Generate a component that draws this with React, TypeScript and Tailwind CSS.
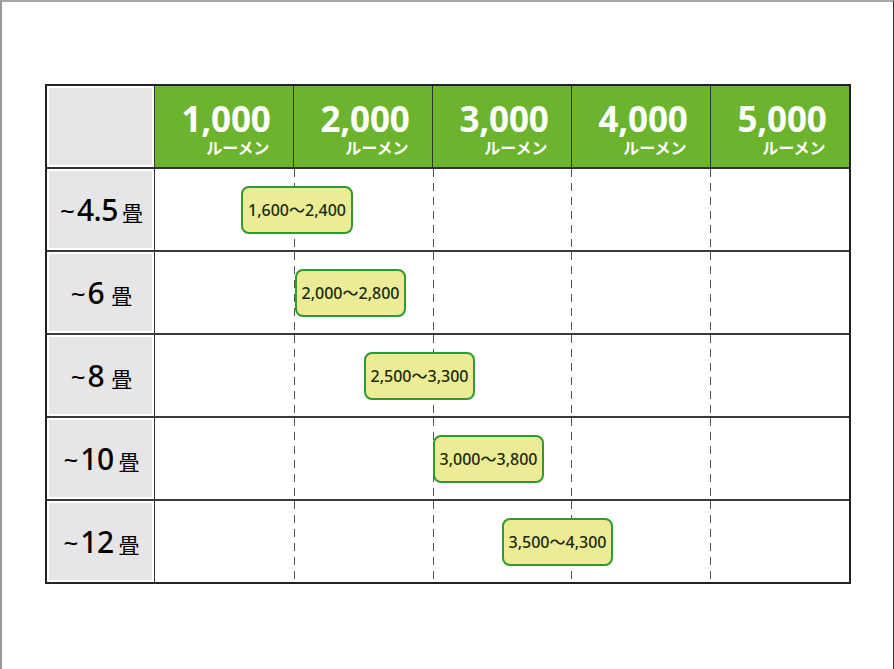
import React from "react";

const lumens = ["1,000", "2,000", "3,000", "4,000", "5,000"];

const rows = [
  { size: "4.5", range: "1,600～2,400", left: 86, width: 112, gap: 4 },
  { size: "6", range: "2,000～2,800", left: 140, width: 111, gap: 7 },
  { size: "8", range: "2,500～3,300", left: 209, width: 111, gap: 7 },
  { size: "10", range: "3,000～3,800", left: 278, width: 111, gap: 5 },
  { size: "12", range: "3,500～4,300", left: 347, width: 111, gap: 5 },
];

function Dashed() {
  return (
    <div className="w-px h-full shrink-0 bg-[repeating-linear-gradient(to_bottom,#555_0px,#555_8px,transparent_8px,transparent_14px)]" />
  );
}

export default function App() {
  return (
    <div className="w-[894px] h-[669px] bg-white border-t-2 border-l-2 border-r border-t-[#a8a8a8] border-l-[#9a9a9a] border-r-[#333] pt-[82px] pl-[43px] font-['Noto_Sans','Noto_Sans_CJK_JP',sans-serif] text-[#111]">
      <div className="w-[806px] h-[500px] border-2 border-[#222] flex flex-col">
        {/* header */}
        <div className="h-[81px] shrink-0 flex border-b-2 border-[#333] box-content">
          <div className="w-[103px] shrink-0 border-r border-[#333] p-[2px] box-content">
            <div className="w-full h-full bg-[#e6e6e8]" />
          </div>
          {lumens.map((l, i) => (
            <div
              key={l}
              className={
                "flex-1 bg-[#6cb42d] flex items-center justify-center text-white " +
                (i < 4 ? "border-r border-[#333]" : "")
              }
            >
              <div className="flex flex-col items-end pt-[8px] pl-[4px]">
                <div className="text-[35px] font-bold leading-[30px] tracking-[-0.2px]">{l}</div>
                <div className="text-[16px] font-bold leading-[18px] mt-[5px] mr-[1px]">ルーメン</div>
              </div>
            </div>
          ))}
        </div>
        {rows.map((r, ri) => (
          <div
            key={r.size}
            className={"flex-1 flex " + (ri < 4 ? "border-b-2 border-[#3a3a3a]" : "")}
          >
            <div className="w-[103px] shrink-0 border-r border-[#333] p-[2px] box-content">
              <div className="w-full h-full bg-[#e6e6e8] flex items-center justify-center">
                <div className="flex items-baseline pl-[2px] text-black">
                  <span className="text-[26px] leading-none inline-block -translate-y-[1px] mr-[2px]">~</span>
                  <span className="text-[30px] font-medium leading-none tracking-[-0.5px]">{r.size}</span>
                  <span className="text-[21px] leading-none" style={{ marginLeft: r.gap }}>畳</span>
                </div>
              </div>
            </div>
            <div className="flex-1 relative flex">
              {[0, 1, 2, 3, 4].map((c) => (
                <div key={c} className="flex-1 flex">
                  {c > 0 && <Dashed />}
                </div>
              ))}
              <div
                className="absolute top-1/2 -translate-y-1/2 h-[48px] rounded-[8px] border-[2.5px] border-[#2f9a2f] bg-[#ecec96] flex items-center justify-center text-[16px] font-medium text-[#1a2a10] whitespace-nowrap"
                style={{ left: r.left, width: r.width }}
              >
                {r.range}
              </div>
            </div>
          </div>
        ))}
      </div>
    </div>
  );
}
